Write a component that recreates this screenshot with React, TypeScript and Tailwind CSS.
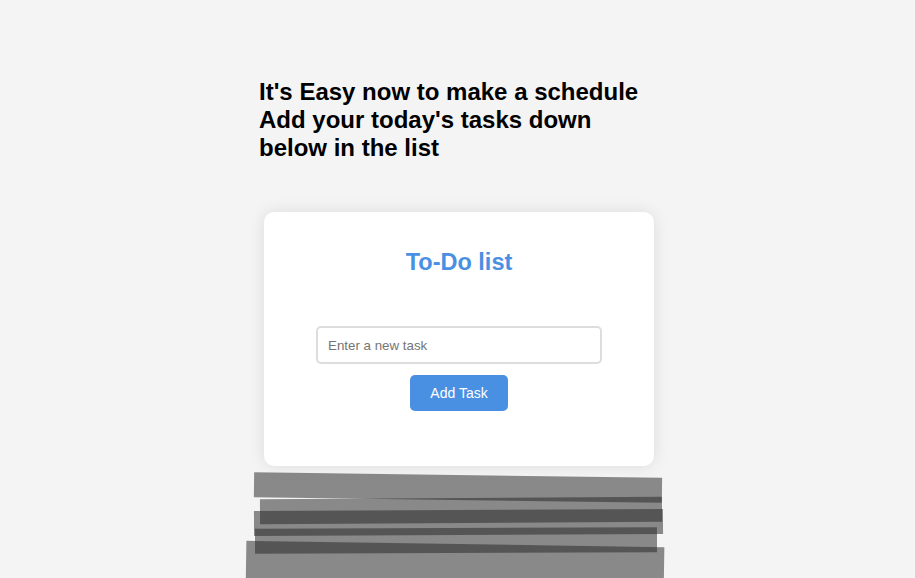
import React from "react";

export default function App() {
  return (
    <div
      className="h-[578px] w-full overflow-hidden bg-[#f4f4f4] flex flex-col items-center"
      style={{ fontFamily: '"Liberation Sans", Arial, sans-serif' }}
    >
      <div className="w-[410px] pt-[78px] flex flex-col">
        <h1 className="pl-[6.5px] text-[24px] font-bold leading-[28px] text-black">
          It's Easy now to make a schedule
          <br />
          Add your today's tasks down
          <br />
          below in the list
        </h1>

        <div className="mt-[50px] ml-[11.5px] w-[390px] rounded-[10px] bg-white shadow-[0_0_16px_rgba(0,0,0,0.1)] pt-[37px] pb-[55px] flex flex-col items-center">
          <h2 className="text-[23.5px] font-bold leading-[27px] text-[#4a90e2]">To-Do list</h2>
          <input
            type="text"
            placeholder="Enter a new task"
            className="mt-[50px] w-[286px] h-[38px] rounded-[5px] border-2 border-[#dddddd] bg-white px-[10px] text-[13.33px] text-black placeholder:text-[#757575] outline-none"
          />
          <button className="mt-[11px] w-[98px] h-[36px] rounded-[5px] bg-[#4a90e2] text-white text-[14px]">
            Add Task
          </button>
        </div>

        <div className="relative h-[120px]">
          <div className="absolute left-[1px] top-[9px] w-[408px] h-[24.5px] bg-[rgba(39,39,39,0.52)] rotate-[0.76deg]" />
          <div className="absolute left-[7px] top-[31.5px] w-[402px] h-[24.6px] bg-[rgba(39,39,39,0.52)] rotate-[-0.35deg]" />
          <div className="absolute left-[1px] top-[44px] w-[409px] h-[25px] bg-[rgba(39,39,39,0.52)] rotate-[-0.25deg]" />
          <div className="absolute left-[2.5px] top-[62.3px] w-[402px] h-[25px] bg-[rgba(39,39,39,0.52)] rotate-[-0.2deg]" />
          <div className="absolute left-[-7px] top-[77.5px] w-[418px] h-[50px] bg-[rgba(39,39,39,0.52)] rotate-[0.88deg]" />
        </div>
      </div>
    </div>
  );
}
